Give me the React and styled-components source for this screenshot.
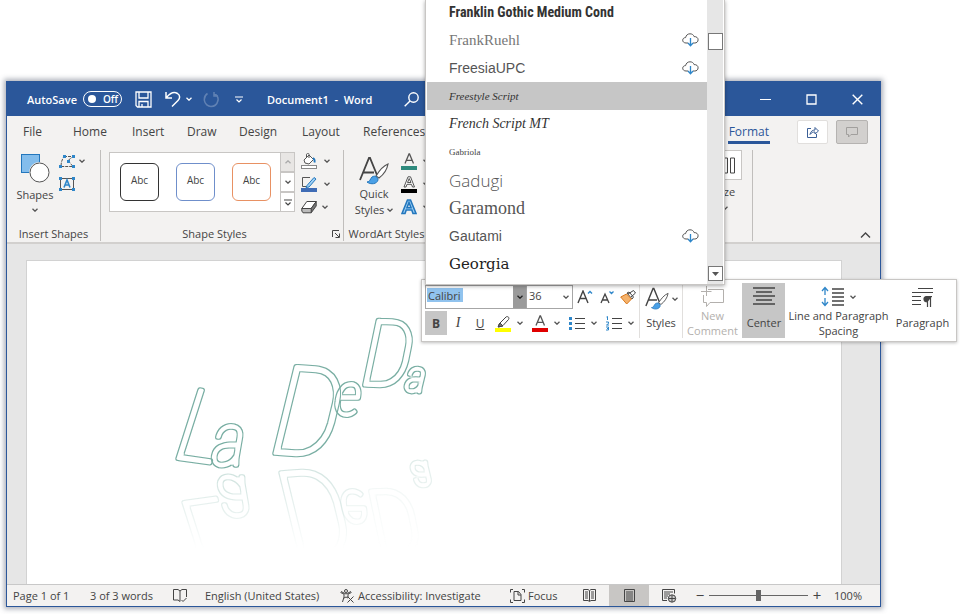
import React from "react";
import styled, { createGlobalStyle, css } from "styled-components";

const ui = '"Open Sans", "Noto Sans", sans-serif';

const Global = createGlobalStyle`
  *, *::before, *::after { box-sizing: border-box; }
  body { margin: 0; background: #fff; font: 11px/13px ${ui}; color: #444; }
  button { font: inherit; color: inherit; background: none; border: 0; padding: 0; margin: 0; }
  input { font: inherit; color: inherit; margin: 0; }
  svg { display: block; flex: none; }
`;

const Desktop = styled.main`
  position: relative;
  display: flex;
  min-height: 100vh;
  padding: 81px 79px 7px 6px;
  overflow: hidden;
`;

const Window = styled.section`
  flex: 1;
  min-width: 0;
  display: flex;
  flex-direction: column;
  border: 1px solid #2b579a;
  background: #f3f2f1;
  box-shadow: 0 0 5px 2px rgba(70, 80, 100, 0.45);
`;

/* Title bar */
const TitleBar = styled.header`
  display: flex;
  align-items: center;
  height: 34px;
  background: #2b579a;
  color: #fff;
  font-weight: 600;
`;
const AutoSave = styled.label`
  display: flex;
  align-items: center;
  gap: 6px;
  width: 128px;
  padding-left: 20px;
`;
const Switch = styled.span`
  display: flex;
  align-items: center;
  gap: 7px;
  width: 39px;
  height: 16px;
  padding-left: 4px;
  border: 1px solid #fff;
  border-radius: 8px;
  font-size: 10px;
`;
const SwitchInput = styled.input`
  appearance: none;
  width: 8px;
  height: 8px;
  border-radius: 50%;
  background: #fff;
`;
const TitleButton = styled.button`
  display: flex;
  align-items: center;
  height: 100%;
  width: ${(p) => p.$w}px;
  opacity: ${(p) => (p.$dim ? 0.25 : 1)};
`;
const DocTitle = styled.h1`
  margin: 0;
  width: 137px;
  font-size: 11px;
  font-weight: 600;
  white-space: pre;
`;
const WindowControls = styled.div`
  display: flex;
  height: 100%;
  margin-left: auto;
`;
const WindowButton = styled.button`
  display: grid;
  place-items: center;
  width: 46px;
  color: #fff;
`;

/* Tabs */
const TabBar = styled.nav`
  display: flex;
  height: 32px;
  align-items: center;
  font-size: 12px;
  line-height: 16px;
`;
const Tabs = styled.div`
  display: grid;
  grid-template-columns: 50px 59px 55px 52px 63px 61px 70px;
  padding-left: 16px;
`;
const Tab = styled.button`
  justify-self: start;
  white-space: nowrap;
`;
const TabActions = styled.div`
  display: flex;
  align-items: center;
  height: 100%;
  margin-left: auto;
  padding-right: 12px;
`;
const ActiveTab = styled(Tab)`
  align-self: flex-end;
  margin: 0 27px 4px 0;
  padding: 0 1px 1px;
  border-bottom: 3px solid #2b579a;
  color: #2b579a;
`;
const ActionButton = styled.button`
  display: grid;
  place-items: center;
  width: ${(p) => (p.$pressed ? 32 : 31)}px;
  height: 24px;
  margin-left: ${(p) => (p.$pressed ? 8 : 0)}px;
  border: 1px solid ${(p) => (p.$pressed ? "#b5b3b1" : "#e1dfdd")};
  border-radius: 2px;
  background: ${(p) => (p.$pressed ? "#d2d0ce" : "#fff")};
`;

/* Ribbon */
const Ribbon = styled.div`
  display: flex;
  height: 96px;
  padding-top: 2px;
  border-bottom: 2px solid #d2d0ce;
`;
const Group = styled.section`
  display: flex;
  flex-direction: column;
  width: ${(p) => p.$w}px;
  height: 91px;
  border-right: 1px solid ${(p) => (p.$open ? "transparent" : "#c0bebc")};
  margin-left: ${(p) => (p.$end ? "auto" : "0")};
  margin-right: ${(p) => (p.$end ? "127px" : "0")};
`;
const GroupBody = styled.div`
  display: flex;
  flex: 1;
  padding-left: ${(p) => p.$left}px;
`;
const GroupLabel = styled.h2`
  position: relative;
  display: flex;
  justify-content: center;
  margin: 0;
  height: 14px;
  padding-right: ${(p) => p.$inset || 0}px;
  font-size: 11px;
  line-height: 14px;
  font-weight: 400;
  white-space: nowrap;
`;
const Launcher = styled.button`
  position: absolute;
  right: 3px;
  top: 3px;
`;
const BigButton = styled.button`
  display: flex;
  flex-direction: column;
  align-items: center;
  width: ${(p) => p.$w}px;
  height: 72px;
  padding-top: ${(p) => p.$top || 0}px;
  line-height: 16px;
`;
const BigLabel = styled.span`
  margin-top: ${(p) => p.$gap || 4}px;
`;
const WithChevron = styled.span`
  display: flex;
  align-items: center;
  gap: 3px;
`;
const Stack = styled.div`
  display: flex;
  flex-direction: column;
  gap: ${(p) => p.$gap || 7}px;
  padding: ${(p) => p.$top || 0}px 0 0 ${(p) => p.$left || 0}px;
`;
const ToolButton = styled.button`
  display: flex;
  align-items: center;
  gap: ${(p) => p.$gap ?? 4}px;
  height: 16px;
`;
const GalleryFrame = styled.div`
  display: flex;
  margin-top: 2px;
  height: 60px;
`;
const Gallery = styled.div`
  display: flex;
  align-items: center;
  width: 172px;
  padding-left: 10px;
  gap: 17px;
  border: 1px solid #c8c6c4;
  background: #fff;
`;
const StyleSwatch = styled.button`
  width: 39px;
  height: 38px;
  padding-bottom: 3px;
  border: 1px solid ${(p) => p.$color};
  border-radius: 6px;
  font-size: 10px;
`;
const GalleryScroll = styled.div`
  display: grid;
  grid-template-rows: 20px 20px 20px;
`;
const GalleryButton = styled.button`
  display: grid;
  place-items: center;
  width: 14px;
  border: 1px solid #c8c6c4;
  border-left: 0;
  background: ${(p) => (p.$off ? "#e8e6e4" : "#fff")};
`;
const SizeBox = styled.span`
  display: flex;
  justify-content: flex-end;
  align-items: center;
  width: 34px;
  height: 30px;
  padding-right: 6px;
  border: 1px solid #c8c6c4;
  background: #fff;
`;
const Collapse = styled.button`
  align-self: flex-end;
  width: 11px;
  margin-left: -20px;
  margin-right: 9px;
  padding-bottom: 4px;
`;

/* Document */
const Workspace = styled.div`
  flex: 1;
  display: flex;
  min-height: 0;
  padding: 16px 38px 0 19px;
  background: #e6e6e6;
`;
const Paper = styled.article`
  flex: 1;
  overflow: hidden;
  border: 1px solid #d2d2d2;
  border-bottom: 0;
  background: #fff;
  padding: 23px 0 0 133px;
`;

/* Status bar */
const StatusBar = styled.footer`
  display: flex;
  align-items: center;
  height: 22px;
  border-top: 1px solid #c8c8c8;
  padding-left: 6px;
`;
const StatusItem = styled.button`
  display: flex;
  align-items: center;
  gap: 3px;
  width: ${(p) => p.$w}px;
  height: 100%;
  white-space: nowrap;
`;
const StatusRight = styled.div`
  display: flex;
  align-items: center;
  height: 100%;
  margin-left: auto;
  padding-right: 18px;
`;
const Views = styled.div`
  display: flex;
  height: 100%;
  margin-right: 4px;
`;
const ViewButton = styled.button`
  display: grid;
  place-items: center;
  width: 40px;
  height: 100%;
  background: ${(p) => (p.$active ? "#c8c6c4" : "transparent")};
`;
const ZoomStep = styled.button`
  width: 14px;
  font-size: 15px;
`;
const ZoomRange = styled.input`
  appearance: none;
  width: 99px;
  height: 12px;
  margin: 0 2px;
  background: linear-gradient(#666, #666) center / 100% 1px no-repeat;
  &::-webkit-slider-thumb {
    appearance: none;
    width: 5px;
    height: 11px;
    background: #666;
  }
`;
const ZoomValue = styled.output`
  width: 38px;
  text-align: right;
`;

/* Floating toolbar */
const MiniBar = styled.section`
  position: absolute;
  left: 421px;
  top: 279px;
  display: flex;
  width: 536px;
  height: 63px;
  padding: 3px;
  border: 1px solid #c8c6c4;
  background: #fff;
  box-shadow: 0 1px 3px rgba(0, 0, 0, 0.25);
`;
const FormatBlock = styled.div`
  display: flex;
  flex-direction: column;
  justify-content: space-between;
  width: 214px;
  padding: 2px 0 3px;
`;
const MiniRow = styled.div`
  display: flex;
  align-items: center;
  height: 24px;
`;
const Combo = styled.div`
  display: flex;
  width: ${(p) => p.$w}px;
  height: 24px;
  border: 1px solid #a6a6a6;
  border-left-width: ${(p) => (p.$joined ? 0 : 1)}px;
`;
const ComboInput = styled.input`
  flex: 1;
  min-width: 0;
  border: 0;
  padding: 0 2px 4px;
  outline: 0;
  background: #fff;
  ${(p) => p.$selected && css`
    background: linear-gradient(#91c3ee, #91c3ee) 1px 2px / 36px 14px no-repeat #fff;
  `}
`;
const ComboButton = styled.button`
  display: grid;
  place-items: center;
  width: 13px;
  background: ${(p) => (p.$dark ? "#9b9b9b" : "#fff")};
`;
const MiniButton = styled.button`
  display: flex;
  align-items: center;
  justify-content: center;
  gap: 6px;
  width: ${(p) => p.$w}px;
  height: 24px;
  background: ${(p) => (p.$active ? "#c6c6c6" : "transparent")};
  font-size: 12px;
  font-weight: ${(p) => (p.$bold ? 700 : 400)};
`;
const ItalicMark = styled.em`
  font: italic 14px/16px "Liberation Serif", serif;
`;
const MiniTile = styled.button`
  display: flex;
  flex-direction: column;
  align-items: center;
  justify-content: space-between;
  width: ${(p) => p.$w}px;
  padding: ${(p) => (p.$tall ? "3px 0 0" : "4px 0 9px")};
  line-height: ${(p) => (p.$tall ? 15 : 13)}px;
  border-left: 1px solid ${(p) => (p.$line ? "#e1dfdd" : "transparent")};
  background: ${(p) => (p.$active ? "#c6c6c6" : "transparent")};
  color: ${(p) => (p.disabled ? "#b3b0ad" : "#444")};
  white-space: nowrap;
`;

/* Font list */
const FontPopup = styled.section`
  position: absolute;
  left: 425px;
  top: 0;
  display: flex;
  width: 300px;
  height: 285px;
  padding-left: 1px;
  padding-right: 1px;
  overflow: hidden;
  background: #fff;
  border: 1px solid #c8c6c4;
  border-width: 0 1px 1px;
  box-shadow: 0 1px 4px rgba(0, 0, 0, 0.35);
`;
const FontOptions = styled.ul`
  flex: 1;
  margin: -2px 0 0;
  padding: 0;
  list-style: none;
`;
const FontOption = styled.li`
  display: flex;
  align-items: center;
  justify-content: space-between;
  height: 28px;
  padding: 0 8px 0 22px;
  background: ${(p) => (p["aria-selected"] ? "#c6c6c6" : "transparent")};
  color: ${(p) => p.$color || "#444"};
  font: ${(p) => p.$font};
`;
const ScrollTrack = styled.div`
  display: flex;
  flex-direction: column;
  justify-content: space-between;
  width: 16px;
  padding: 33px 0 3px 1px;
  background: #e6e6e6;
`;
const ScrollThumb = styled.div`
  height: 17px;
  border: 1px solid #777;
  background: #fff;
`;
const ScrollButton = styled.button`
  display: grid;
  place-items: center;
  height: 15px;
  border: 1px solid #777;
  background: #fff;
`;

function Svg({ w, h, children, color = "currentColor", sw = 1 }) {
  return (
    <svg width={w} height={h} viewBox={`0 0 ${w} ${h}`} fill="none" stroke={color} strokeWidth={sw} aria-hidden="true">
      {children}
    </svg>
  );
}
const Chevron = ({ up, color = "#555" }) => (
  <Svg w={6} h={4} color={color} sw={1.3}>
    <path d={up ? "M.5 3.2 3 .8l2.5 2.4" : "M.5 .8 3 3.2 5.5 .8"} />
  </Svg>
);
const CloudDownload = () => (
  <Svg w={17} h={14} color="#555">
    <path d="M6 10H4C2 10 .7 8.700 .7 7.200S2 4.500 3.600 4.600C4 2.300 5.700 .8 8 .8c2 0 3.500 1 4.100 2.800 2.300-.2 4 1.200 4 3.200S14.500 10 12.800 10H11" />
    <path stroke="#2e86c9" strokeWidth="1.300" d="M8.500 5v7.500M6 10l2.500 2.700L11 10" />
  </Svg>
);
const BrushA = ({ w = 30, h = 29 }) => (
  <svg width={w} height={h} viewBox="0 0 30 29" fill="none" aria-hidden="true">
    <path d="M1 24 10 2h1l7 17M4.500 16.500H15" stroke="#444" strokeWidth="1.8" />
    <path d="M29 8c-5 2-9 7-12 12l3 2c4-3 8-8 9-14Z" fill="#fff" stroke="#555" strokeWidth="1.200" />
    <path d="M8 26c3 0 3-3 5-5 3-2 6 0 6 3-1 4-7 5-11 2Z" fill="#4aa0e6" stroke="#2377bd" />
  </svg>
);
const LetterA = ({ bar, outline, blue }) => (
  <Svg w={16} h={17} color={blue ? "#2377bd" : "#555"} sw={1.300}>
    {outline ? (
      <path strokeWidth={blue ? 1.600 : 1} fill={blue ? "#9fd0f5" : "#fff"} d={blue ? "M1 14.500 6.500 1h3L15 14.500h-3L10.800 11H5.200L4 14.500ZM6 8.800h4L8 3.500Z" : "M3 11 7 .8h2.500L13.500 11h-2l-1-2.700H6L5 11ZM6.500 6.500H10L8.200 2.500Z"} />
    ) : (
      <path d="M4 10.500 8 1h.5l4 9.500M5.500 7.300H11" />
    )}
    {bar && <path d="M0 15h16" stroke={bar} strokeWidth="4" />}
  </Svg>
);
const ShapesIcon = () => (
  <Svg w={29} h={29}>
    <rect x=".5" y=".5" width="18" height="18" fill="#83bdec" stroke="#2377bd" />
    <circle cx="18.500" cy="18.500" r="10.500" fill="#f3f2f1" stroke="none" />
    <circle cx="18.500" cy="18.500" r="9.500" fill="#fff" stroke="#555" />
  </Svg>
);
const Handles = ({ pts }) => pts.map(([x, y]) => <rect key={`${x}-${y}`} x={x} y={y} width="3" height="3" fill="#2e86c9" stroke="none" />);
const EditShape = () => (
  <Svg w={16} h={13} color="#555">
    <path strokeDasharray="3 1" d="M5 1.500h9l-5 4 5 6H2c0-4 1-7 3-10" />
    <Handles pts={[[4, 0], [13, 0], [13, 10], [0, 10], [8, 5]]} />
  </Svg>
);
const TextBoxIcon = () => (
  <Svg w={16} h={14} color="#555">
    <path d="M1.500 1.500h13v11h-13z" />
    <Handles pts={[[0, 0], [13, 0], [13, 11], [0, 11]]} />
    <path stroke="#2e86c9" strokeWidth="1.600" d="M5 10.500 8 3l3 7.500M6 8h4" />
  </Svg>
);
const FillIcon = () => (
  <Svg w={16} h={16} color="#555">
    <path fill="#fff" d="m3 7 5-5 4.500 4.500L8 11 4 10ZM8 5V1.500C8-.5 5.500 0 5.500 2v2" />
    <path stroke="#2377bd" strokeWidth="1.800" d="M12 5c1.500 1 2 2.500 1.500 4.500" />
    <rect x=".5" y="12.500" width="15" height="3" fill="#fff" stroke="#888" />
  </Svg>
);
const OutlineIcon = () => (
  <Svg w={16} h={16} color="#555">
    <path d="M9 1.500H1.500v9H6" />
    <path fill="#9fd0f5" stroke="#2377bd" d="m6 9.500 7-8 2 1.500-7 8-3 .5Z" />
    <path stroke="#3f6cb5" strokeWidth="4" d="M0 14h16" />
  </Svg>
);
const EffectsIcon = () => (
  <Svg w={16} h={14} color="#444">
    <path fill="#fff" d="m.8 8.500 5-7h9.400l-5 7Z" />
    <path fill="#777" d="m10.200 8.500 5-7V6l-5 6.800Z" />
    <path fill="#bbb" d="M.8 8.500h9.400v4.300H2L.8 11Z" />
  </Svg>
);
const Lines = ({ kind }) => (
  <Svg w={16} h={15} color="#444">
    <path d="M6 2.500h10M6 7.500h10M6 12.500h10" strokeWidth="1.200" />
    {kind === "number" ? (
      <path stroke="#2e86c9" d="M.5 1 1.500.5V4M0 6h2.500v1.500L.5 9H3M0 11h2.500v3H0M1 12.500h1.500" />
    ) : (
      <path stroke="#2e86c9" strokeWidth="3" d="M0 2.500h3M0 7.500h3M0 12.500h3" />
    )}
  </Svg>
);

const FONTS = [
  ["Franklin Gothic Medium Cond", 'bold 14px "Roboto Condensed", sans-serif', false, "#333"],
  ["FrankRuehl", '15px "Liberation Serif", serif', true, "#777"],
  ["FreesiaUPC", '14px "Liberation Sans", sans-serif', true, "#555"],
  ["Freestyle Script", 'italic 11px "Liberation Serif", cursive', false, "#333"],
  ["French Script MT", 'italic 14px "Liberation Serif", cursive', false, "#333"],
  ["Gabriola", '9px "Liberation Serif", serif', false, "#444"],
  ["Gadugi", '300 17px "Open Sans", sans-serif', false, "#555"],
  ["Garamond", '18px "Liberation Serif", serif', false, "#555"],
  ["Gautami", '14px "Liberation Sans", sans-serif', true, "#555"],
  ["Georgia", '15px "DejaVu Serif", serif', false, "#222"],
];

/* Each letter: glyph, x, baseline y, size, rotation, mirrored baseline, mirrored opacity */
const LETTERS = [
  ["L", 174, 459, 100, 8, 504, 0.34],
  ["a", 212, 466, 74, 0, 478, 0.4],
  ["D", 270, 454, 124, 4, 474, 0.34],
  ["e", 335, 416, 60, 0, 492, 0.26],
  ["D", 361, 386, 92, 2, 492, 0.12],
  ["a", 405, 392, 44, 4, 464, 0.22],
];

const ArtSvg = styled.svg`
  overflow: hidden;
  font-family: "Roboto Condensed", "Roboto", sans-serif;
  font-weight: 100;
  font-style: italic;
`;

function WordArt() {
  return (
    <ArtSvg width="290" height="275" viewBox="160 285 290 275" role="img" aria-label="La De Da">
      <defs>
        <filter id="outline" x="-20%" y="-20%" width="140%" height="140%">
          <feMorphology in="SourceGraphic" operator="erode" radius="1" result="inner" />
          <feComposite in="SourceGraphic" in2="inner" operator="out" />
        </filter>
        <linearGradient id="fade" x1="0" y1="465" x2="0" y2="550" gradientUnits="userSpaceOnUse">
          <stop offset="0" stopColor="#fff" />
          <stop offset="1" stopColor="#fff" stopOpacity="0" />
        </linearGradient>
        <mask id="fadeMask" maskUnits="userSpaceOnUse" x="160" y="440" width="280" height="120">
          <rect x="160" y="440" width="280" height="120" fill="url(#fade)" />
        </mask>
      </defs>
      <g fill="#79aea3" stroke="#79aea3" strokeWidth="5" strokeLinejoin="round">
        {LETTERS.map(([ch, x, y, size, turn], i) => (
          <g key={i} id={`art${i}`} filter="url(#outline)">
            <text x={x} y={y} fontSize={size} transform={`rotate(${turn} ${x} ${y})`}>{ch}</text>
          </g>
        ))}
      </g>
      <g mask="url(#fadeMask)">
        {LETTERS.map(([, , y, , , mirror, opacity], i) => (
          <use key={i} href={`#art${i}`} fill="#79aea3" stroke="#79aea3" strokeWidth="5" strokeLinejoin="round" opacity={opacity} transform={`translate(6 ${y + mirror}) scale(1 -1)`} />
        ))}
      </g>
    </ArtSvg>
  );
}

export default function App() {
  return (
    <>
      <Global />
      <Desktop>
        <Window aria-label="Document1 - Word">
          <TitleBar>
            <AutoSave>
              AutoSave
              <Switch><SwitchInput type="checkbox" role="switch" />Off</Switch>
            </AutoSave>
            <TitleButton $w={30} aria-label="Save">
              <Svg w={17} h={17} sw={1.300}><path d="M1 1h15v15H2.500L1 14.500ZM4 1v6h9V1M4 16v-5.500h9V16M7 13v3" /></Svg>
            </TitleButton>
            <TitleButton $w={38} aria-label="Undo">
              <WithChevron>
                <Svg w={18} h={17} sw={1.500}><path d="M1 1v6h6M1.500 6.500C6 1 10 1 12.500 2.500c3 2 2.500 5 .5 7L7 15.500" /></Svg>
                <Chevron color="#fff" />
              </WithChevron>
            </TitleButton>
            <TitleButton $w={32} $dim aria-label="Redo">
              <Svg w={17} h={17} sw={1.500}><path d="M11 1v4h4M11 2.500c3 1.500 4.500 4 4 7-1 4-4 6-7 6s-6-2.500-6.500-5.500S2 4 4.500 2.500" /></Svg>
            </TitleButton>
            <TitleButton $w={32} aria-label="Customize Quick Access Toolbar">
              <Svg w={8} h={7} sw={1.200}><path d="M0 1h8M1.500 3.500 4 6l2.500-2.500" /></Svg>
            </TitleButton>
            <DocTitle>Document1  -  Word</DocTitle>
            <TitleButton $w={20} aria-label="Search">
              <Svg w={15} h={15} sw={1.400}><circle cx="9.500" cy="5.500" r="4.700" /><path d="M6 9 .7 14.300" /></Svg>
            </TitleButton>
            <WindowControls>
              <WindowButton aria-label="Minimize"><Svg w={11} h={11} sw={1}><path d="M0 5.500h11" /></Svg></WindowButton>
              <WindowButton aria-label="Maximize"><Svg w={11} h={11} sw={1.300}><path d="M1 1h9v9H1z" /></Svg></WindowButton>
              <WindowButton aria-label="Close"><Svg w={11} h={11} sw={1.400}><path d="m.7.7 9.600 9.600M10.300.7.7 10.300" /></Svg></WindowButton>
            </WindowControls>
          </TitleBar>

          <TabBar>
            <Tabs>
              {["File", "Home", "Insert", "Draw", "Design", "Layout", "References"].map((t) => <Tab key={t}>{t}</Tab>)}
            </Tabs>
            <TabActions>
              <ActiveTab>Format</ActiveTab>
              <ActionButton aria-label="Share">
                <Svg w={12} h={12} color="#3b5f96"><path d="M4 2.500H.5v9h9V8M3 8.500c.5-3 2.500-4.500 5-4.500V1.500L11.500 5 8 8V6C6 6 4.500 6.500 3 8.500Z" /></Svg>
              </ActionButton>
              <ActionButton $pressed aria-label="Comments">
                <Svg w={12} h={11} color="#a19f9d"><path d="M.5.5h11v7H5L2.500 10V7.500h-2Z" /></Svg>
              </ActionButton>
            </TabActions>
          </TabBar>

          <Ribbon>
            <Group $w={94}>
              <GroupBody $left={6}>
                <BigButton $w={44} $top={4}>
                  <ShapesIcon />
                  <BigLabel>Shapes</BigLabel>
                  <Stack $top={5}><Chevron /></Stack>
                </BigButton>
                <Stack $left={2} $top={3} $gap={7}>
                  <ToolButton aria-label="Edit shape"><EditShape /><Chevron /></ToolButton>
                  <ToolButton aria-label="Text box"><TextBoxIcon /></ToolButton>
                </Stack>
              </GroupBody>
              <GroupLabel>Insert Shapes</GroupLabel>
            </Group>
            <Group $w={243}>
              <GroupBody $left={8}>
                <GalleryFrame>
                  <Gallery>
                    <StyleSwatch $color="#333">Abc</StyleSwatch>
                    <StyleSwatch $color="#6f8fcb">Abc</StyleSwatch>
                    <StyleSwatch $color="#e89163">Abc</StyleSwatch>
                  </Gallery>
                  <GalleryScroll>
                    <GalleryButton $off aria-label="Previous styles"><Chevron up color="#aaa" /></GalleryButton>
                    <GalleryButton aria-label="Next styles"><Chevron /></GalleryButton>
                    <GalleryButton aria-label="More styles"><Svg w={8} h={7} sw={1.200}><path d="M0 1h8M1.500 3.500 4 6l2.500-2.500" /></Svg></GalleryButton>
                  </GalleryScroll>
                </GalleryFrame>
                <Stack $left={6} $top={3}>
                  <ToolButton $gap={7} aria-label="Shape fill"><FillIcon /><Chevron /></ToolButton>
                  <ToolButton $gap={7} aria-label="Shape outline"><OutlineIcon /><Chevron /></ToolButton>
                  <ToolButton $gap={5} aria-label="Shape effects"><EffectsIcon /><Chevron /></ToolButton>
                </Stack>
              </GroupBody>
              <GroupLabel $inset={15}>
                Shape Styles
                <Launcher aria-label="Shape styles settings">
                  <Svg w={8} h={8}><path d="M.5 7V.5H7M3 3l4 4M7.500 3.500v4h-4" /></Svg>
                </Launcher>
              </GroupLabel>
            </Group>
            <Group $w={86} $open>
              <GroupBody $left={10}>
                <BigButton $w={42} $top={6}>
                  <BrushA />
                  <BigLabel $gap={1}>Quick</BigLabel>
                  <WithChevron>Styles <Chevron /></WithChevron>
                </BigButton>
                <Stack $left={7} $top={3}>
                  <ToolButton $gap={6} aria-label="Text fill"><LetterA bar="#2f8a7d" /><Chevron /></ToolButton>
                  <ToolButton $gap={6} aria-label="Text outline"><LetterA outline bar="#000" /><Chevron /></ToolButton>
                  <ToolButton $gap={6} aria-label="Text effects"><LetterA outline blue /><Chevron /></ToolButton>
                </Stack>
              </GroupBody>
              <GroupLabel>WordArt Styles</GroupLabel>
            </Group>
            <Group $w={50} $end>
              <GroupBody $left={4}>
                <BigButton $w={36}>
                  <SizeBox><Svg w={12} h={17}><path d="M.5 1h4v15h-4M7.500 1h4v15h-4z" /></Svg></SizeBox>
                  <BigLabel>Size</BigLabel>
                  <Stack $top={6}><Chevron /></Stack>
                </BigButton>
              </GroupBody>
            </Group>
            <Collapse aria-label="Collapse the ribbon"><Svg w={11} h={6} sw={1.400}><path d="M1 5.500 5.500 1 10 5.500" /></Svg></Collapse>
          </Ribbon>

          <Workspace>
            <Paper><WordArt /></Paper>
          </Workspace>

          <StatusBar>
            <StatusItem $w={77}>Page 1 of 1</StatusItem>
            <StatusItem $w={83}>3 of 3 words</StatusItem>
            <StatusItem $w={32} aria-label="Spelling">
              <Svg w={14} h={14}><path d="M7 12.500 5 11H.5V.5H5L7 2l2-1.500h4.500V8M7 2v10.500M8.500 11l1.500 1.500L13.500 9" /></Svg>
            </StatusItem>
            <StatusItem $w={135}>English (United States)</StatusItem>
            <StatusItem $w={170}>
              <Svg w={15} h={14}><circle cx="6" cy="2" r="1.500" /><path d="M.5 3.500 4 5v3l-1.500 5M11.500 3.500 8 5v3M1 2.500 6 5l5-2.500M4 9l2-1 2 1M7.500 7.500l6 6M13.500 7.500l-6 6" /></Svg>
              Accessibility: Investigate
            </StatusItem>
            <StatusItem $w={56}>
              <Svg w={15} h={14}><path d="M3 .5H.5v3M12 .5h2.500v3M3 13.500H.5v-3M12 13.500h2.500v-3M4 2.500h4.500l2.500 3v6H4ZM8 2.500v3.500h3" /></Svg>
              Focus
            </StatusItem>
            <StatusRight>
              <Views>
                <ViewButton aria-label="Read mode">
                  <Svg w={13} h={13}><path d="M6.500 12.500 5 11.500H.5V.5H5l1.500 1L8 .5h4.500v11H8ZM6.500 2v10M2 3h3M2 5h3M2 7h3M2 9h3M8 3h3M8 5h3M8 7h3M8 9h3" /></Svg>
                </ViewButton>
                <ViewButton $active aria-label="Print layout">
                  <Svg w={11} h={13}><path d="M.5.5h10v12H.5zM2 3h7M2 5h7M2 7h7M2 9h7M2 11h7" /></Svg>
                </ViewButton>
                <ViewButton aria-label="Web layout">
                  <Svg w={15} h={14}><path d="M5 11.500H.5V.5h12v4M2 3h9M2 5h6M2 7h4M2 9h3" /><circle cx="10" cy="9.500" r="3.700" fill="#ccc" /><path d="M6.500 9.500h7M10 6v7" /></Svg>
                </ViewButton>
              </Views>
              <ZoomStep aria-label="Zoom out">−</ZoomStep>
              <ZoomRange type="range" min="10" max="190" defaultValue="100" aria-label="Zoom" />
              <ZoomStep aria-label="Zoom in">+</ZoomStep>
              <ZoomValue>100%</ZoomValue>
            </StatusRight>
          </StatusBar>
        </Window>

        <MiniBar aria-label="Text formatting">
          <FormatBlock>
            <MiniRow>
              <Combo $w={102}>
                <ComboInput $selected defaultValue="Calibri" aria-label="Font" />
                <ComboButton $dark aria-label="Font list"><Chevron color="#222" /></ComboButton>
              </Combo>
              <Combo $w={46} $joined>
                <ComboInput defaultValue="36" aria-label="Font size" />
                <ComboButton aria-label="Font size list"><Chevron /></ComboButton>
              </Combo>
              <MiniButton $w={24} aria-label="Grow font">
                <Svg w={16} h={14} sw={1.400}><path d="M1 13 6 1l5 12M3 8.500h6" /><path stroke="#2e86c9" d="m11 3.500 2-2 2 2" /></Svg>
              </MiniButton>
              <MiniButton $w={20} aria-label="Shrink font">
                <Svg w={14} h={14} sw={1.300}><path d="M1 13 5 4l4 9M2.500 10h5" /><path stroke="#2e86c9" d="m9.500 1.500 2 2 2-2" /></Svg>
              </MiniButton>
              <MiniButton $w={22} aria-label="Format painter">
                <Svg w={16} h={15}><path fill="#fff" d="m8 4 5.500-3.500L15.500 3 11 7M7 3l5 6 1.500-2L9 2Z" /><path fill="#f5b26b" stroke="#d9791f" d="M6.500 4 .7 7l6 7L11.500 9Z" /></Svg>
              </MiniButton>
            </MiniRow>
            <MiniRow>
              <MiniButton $w={22} $active $bold aria-label="Bold">B</MiniButton>
              <MiniButton $w={22} aria-label="Italic"><ItalicMark>I</ItalicMark></MiniButton>
              <MiniButton $w={22} aria-label="Underline"><u>U</u></MiniButton>
              <MiniButton $w={36} aria-label="Highlight color">
                <Svg w={16} h={17}><path fill="#fff" d="m4 9 7-7c1-1 4 0 2.500 2.500L8 10.500 3.500 12Z" /><path fill="#777" d="M3 12 5 8l3 3Z" /><path stroke="#ffff00" strokeWidth="4" d="M0 15h16" /></Svg>
                <Chevron />
              </MiniButton>
              <MiniButton $w={38} aria-label="Font color"><LetterA bar="#e00000" /><Chevron /></MiniButton>
              <MiniButton $w={36} aria-label="Bullets"><Lines /><Chevron /></MiniButton>
              <MiniButton $w={38} aria-label="Numbering"><Lines kind="number" /><Chevron /></MiniButton>
            </MiniRow>
          </FormatBlock>
          <MiniTile $w={43} $line>
            <WithChevron><BrushA w={24} h={23} /><Chevron /></WithChevron>
            Styles
          </MiniTile>
          <MiniTile $w={60} $line $tall disabled>
            <Svg w={24} h={22}><path d="M7 3.500h15.500v13H9L5.500 20.500v-4h-3V9M5.500 0v10M0 5.500h10.500" /></Svg>
            <span>New<br />Comment</span>
          </MiniTile>
          <MiniTile $w={43} $active>
            <Svg w={22} h={18} sw={1.300}><path d="M0 1h22M3 5h16M0 9h22M3 13h16M0 17h22" /></Svg>
            Center
          </MiniTile>
          <MiniTile $w={106} $tall>
            <WithChevron>
              <Svg w={26} h={22} sw={1.300}><path d="M11 3h12M11 7h12M11 11h12M11 15h12M11 19h12" /><path stroke="#2e86c9" d="M4 2v7M1 5l3-3.500L7 5M4 12v7M1 16l3 3.500L7 16" /></Svg>
              <Chevron />
            </WithChevron>
            <span>Line and Paragraph<br />Spacing</span>
          </MiniTile>
          <MiniTile $w={62}>
            <Svg w={21} h={21} sw={1.200}><path d="M6 1.500h15M0 5.500h21M0 9.500h9M0 13.500h9M0 17.500h9" /><path fill="#444" d="M15.500 14V9.500V20M18.500 9.500V20M20 9.500h-5.500c-3.500 0-3.500 5.500 1 5.500" /></Svg>
            Paragraph
          </MiniTile>
        </MiniBar>

        <FontPopup aria-label="Fonts">
          <FontOptions role="listbox" aria-label="Font">
            {FONTS.map(([name, font, cloud, color]) => (
              <FontOption key={name} role="option" aria-selected={name === "Freestyle Script"} $font={font} $color={color}>
                {name}
                {cloud && <CloudDownload />}
              </FontOption>
            ))}
          </FontOptions>
          <ScrollTrack>
            <ScrollThumb />
            <ScrollButton aria-label="Scroll down"><Svg w={7} h={4}><path fill="#555" stroke="none" d="M0 0h7L3.500 4Z" /></Svg></ScrollButton>
          </ScrollTrack>
        </FontPopup>
      </Desktop>
    </>
  );
}
